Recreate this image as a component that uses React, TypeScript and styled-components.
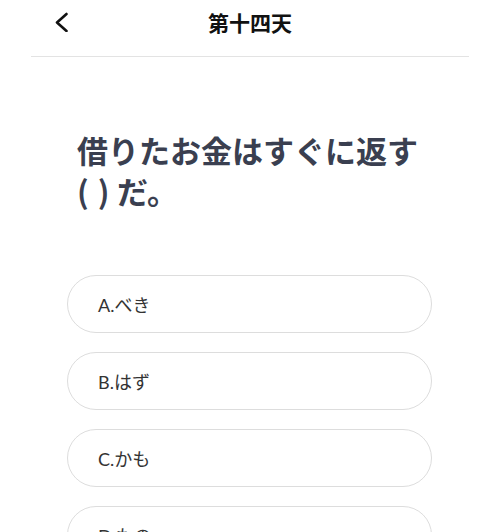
import styled, { createGlobalStyle } from "styled-components";

const GlobalStyle = createGlobalStyle`
  html, body {
    margin: 0;
    padding: 0;
    background: #ffffff;
  }
  body {
    font-family: "Noto Sans CJK JP", "Noto Sans", sans-serif;
  }
`;

const Page = styled.div`
  width: 500px;
  height: 532px;
  overflow: hidden;
  background: #ffffff;
`;

const Header = styled.header`
  position: relative;
  height: 44px;
  display: flex;
  align-items: center;
  justify-content: center;
`;

const BackButton = styled.button`
  position: absolute;
  left: 50px;
  top: 8px;
  width: 24px;
  height: 28px;
  padding: 0;
  border: none;
  background: transparent;
  display: flex;
  align-items: center;
  justify-content: center;
`;

const Title = styled.h1`
  margin: 0;
  font-size: 21px;
  font-weight: 700;
  color: #111111;
`;

const Divider = styled.div`
  margin: 12px 31px 0;
  height: 1px;
  background: #e3e3e3;
`;

const Question = styled.p`
  margin: 72px 0 0;
  padding: 0 60px 0 77px;
  font-size: 31px;
  line-height: 41px;
  font-weight: 700;
  color: #3a3f50;
`;

const Line = styled.span`
  display: block;
  white-space: pre;
`;

const Blank = styled.span`
  display: inline-block;
  width: 38px;
  margin-right: 2px;
  letter-spacing: 9px;
`;

const Options = styled.div`
  margin: 64px 68px 0 67px;
  display: flex;
  flex-direction: column;
  gap: 19px;
`;

const Option = styled.button`
  height: 58px;
  box-sizing: border-box;
  border: 1.5px solid #dddddd;
  border-radius: 29px;
  background: #ffffff;
  padding: 0 0 0 30px;
  display: flex;
  align-items: center;
  font-family: "Lato", "Noto Sans CJK JP", sans-serif;
  font-size: 18px;
  color: #333333;
  text-align: left;
  flex-shrink: 0;
`;

const options = ["A.べき", "B.はず", "C.かも", "D.もの"];

export default function App() {
  return (
    <Page>
      <GlobalStyle />
      <Header>
        <BackButton aria-label="back">
          <svg width="16" height="20" viewBox="0 0 16 20">
            <polyline
              points="12.5,2 3,10.5 12.5,19"
              fill="none"
              stroke="#111"
              strokeWidth="2.6"
              strokeLinecap="round"
              strokeLinejoin="round"
            />
          </svg>
        </BackButton>
        <Title>第十四天</Title>
      </Header>
      <Divider />
      <Question>
        <Line>借りたお金はすぐに返す</Line>
        <Line>
          <Blank>()</Blank>だ。
        </Line>
      </Question>
      <Options>
        {options.map((o) => (
          <Option key={o}>{o}</Option>
        ))}
      </Options>
    </Page>
  );
}
